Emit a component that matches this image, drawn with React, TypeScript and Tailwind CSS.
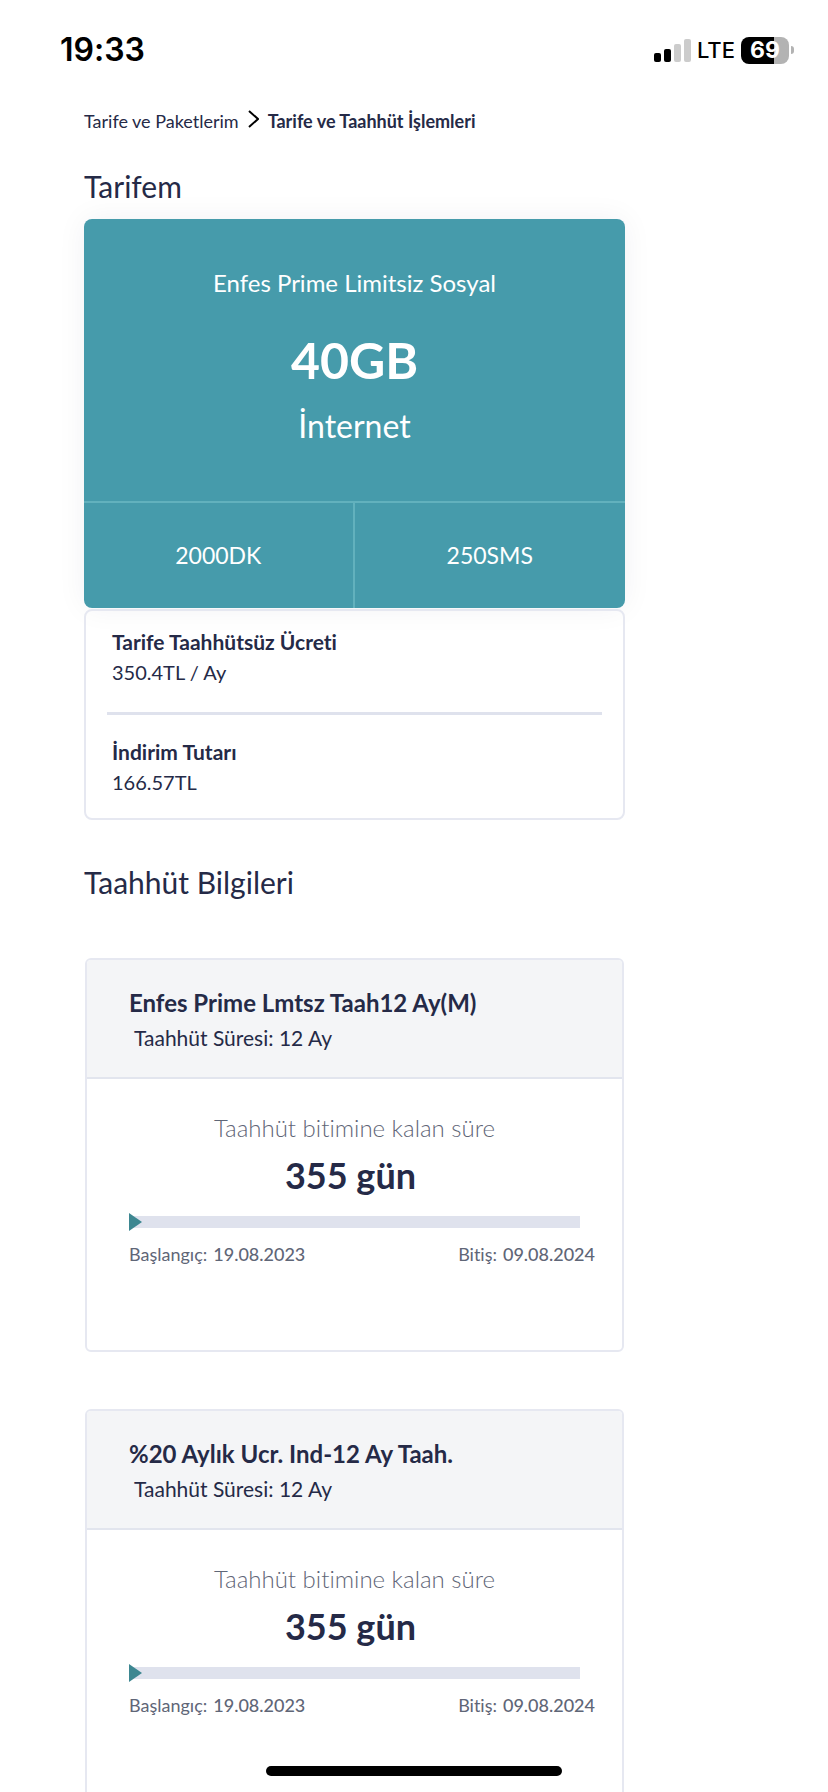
import React from "react";

const commitments = [
  {
    title: "Enfes Prime Lmtsz Taah12 Ay(M)",
    duration: "12 Ay",
    remaining: "355 gün",
    start: "19.08.2023",
    end: "09.08.2024",
  },
  {
    title: "%20 Aylık Ucr. Ind-12 Ay Taah.",
    duration: "12 Ay",
    remaining: "355 gün",
    start: "19.08.2023",
    end: "09.08.2024",
  },
];

const fees = [
  { label: "Tarife Taahhütsüz Ücreti", value: "350.4TL / Ay" },
  { label: "İndirim Tutarı", value: "166.57TL" },
];

function StatusBar() {
  return (
    <header className="flex h-[109px] items-start justify-between pl-[60px] pr-[34px] pt-[30px] font-['Inter',sans-serif] text-black">
      <span className="text-[32px] font-semibold leading-10">19:33</span>
      <div className="flex h-10 items-center gap-[6px]">
        <svg width="37" height="23" viewBox="0 0 37 23" aria-hidden="true">
          <rect x="0" y="14" width="7" height="9" rx="2" fill="#000" />
          <rect x="10" y="10" width="7" height="13" rx="2" fill="#000" />
          <rect x="20" y="5" width="7" height="18" rx="2" fill="#ccc" />
          <rect x="30" y="0" width="7" height="23" rx="2" fill="#ccc" />
        </svg>
        <span className="text-[22px] font-medium leading-10">LTE</span>
        <div className="flex items-center gap-[2px]">
          <div className="flex h-[27px] w-12 items-center justify-center rounded-lg bg-linear-to-r from-black from-[69%] to-[#b3b3b3] to-[69%] text-[23px] font-bold leading-none text-white">
            69
          </div>
          <div className="h-2 w-[3px] rounded-r-full bg-[#b3b3b3]" />
        </div>
      </div>
    </header>
  );
}

function Breadcrumb() {
  return (
    <nav aria-label="Breadcrumb" className="flex items-center text-lg leading-6">
      <a href="#paketler">Tarife ve Paketlerim</a>
      <svg
        className="mx-[9px] -mt-1"
        width="11"
        height="18"
        viewBox="0 0 11 18"
        fill="none"
        stroke="#000"
        strokeWidth="2"
        aria-hidden="true"
      >
        <path d="M1 1l9 8-9 8" />
      </svg>
      <span className="font-bold" aria-current="page">
        Tarife ve Taahhüt İşlemleri
      </span>
    </nav>
  );
}

function PlanCard() {
  return (
    <div className="mt-[13px] overflow-hidden rounded-lg bg-[#469bab] text-center text-white shadow-[0_0_30px_rgba(34,40,68,0.06)]">
      <div className="pb-[55px] pt-12">
        <p className="text-2xl leading-8">Enfes Prime Limitsiz Sosyal</p>
        <p className="mt-[31px] text-[50px] font-bold leading-[60px]">40GB</p>
        <p className="mt-4 text-[32px] leading-10">İnternet</p>
      </div>
      <div className="grid grid-cols-2 divide-x-2 divide-[#62b1bd] border-t-2 border-[#62b1bd] text-[23px] leading-[105px]">
        <p>2000DK</p>
        <p>250SMS</p>
      </div>
    </div>
  );
}

function FeeBox() {
  return (
    <dl className="mt-px rounded-lg border-2 border-[#e6e8f1] px-[21px] pb-5 pt-[15px] leading-[31px]">
      {fees.map((fee, i) => (
        <div
          key={fee.label}
          className={i > 0 ? "mt-6 border-t-3 border-[#dfe2ed] px-[5px] pt-[21px]" : "px-[5px]"}
        >
          <dt className="text-[21px] font-bold">{fee.label}</dt>
          <dd className="text-xl leading-[31px]">{fee.value}</dd>
        </div>
      ))}
    </dl>
  );
}

function CommitmentCard({ item }: { item: (typeof commitments)[number] }) {
  return (
    <article className="mx-px rounded-md border-2 border-[#e6e8f1]">
      <div className="rounded-t-sm border-b-2 border-[#e2e5ee] bg-[#f4f5f7] px-[42px] pb-[25px] pt-[27px]">
        <h3 className="text-2xl font-bold leading-8">{item.title}</h3>
        <p className="mt-[5px] pl-[5px] text-[21px] leading-7">Taahhüt Süresi: {item.duration}</p>
      </div>
      <div className="pb-[84px] pl-[42px] pr-[27px] pt-[33px]">
        <div className="pr-[15px] text-center">
          <p className="text-2xl font-light leading-8 text-[#5f6677]">
            Taahhüt bitimine kalan süre
          </p>
          <p className="mt-[9px] pr-2 text-4xl font-bold leading-[44px]">{item.remaining}</p>
          <div className="mt-4 flex items-center" role="progressbar" aria-label="Taahhüt" aria-valuenow={0}>
            <svg width="13" height="18" viewBox="0 0 13 18" aria-hidden="true">
              <path d="M0 3h13v12H0z" fill="#dfe2ed" />
              <path d="M0 0l13 9-13 9z" fill="#3d8791" />
            </svg>
            <div className="h-3 flex-1 bg-[#dfe2ed]" />
          </div>
        </div>
        <div className="mt-[11px] flex justify-between text-lg leading-6 text-[#5f6677]">
          <p className="flex gap-[6px]">
            Başlangıç: <span className="font-medium">{item.start}</span>
          </p>
          <p className="flex gap-[6px]">
            Bitiş: <span className="font-medium">{item.end}</span>
          </p>
        </div>
      </div>
    </article>
  );
}

function App() {
  return (
    <div className="relative h-screen overflow-hidden bg-white font-['Lato',sans-serif] text-[#252a47] [font-variant-ligatures:none]">
      <StatusBar />
      <main className="ml-[84px] mr-[203px]">
        <Breadcrumb />
        <h2 className="mt-[33px] text-3xl leading-10">Tarifem</h2>
        <PlanCard />
        <FeeBox />
        <h2 className="mt-[42px] text-3xl leading-10">Taahhüt Bilgileri</h2>
        <div className="mt-14 flex flex-col gap-[57px]">
          {commitments.map((item) => (
            <CommitmentCard key={item.title} item={item} />
          ))}
        </div>
      </main>
      {/* home indicator */}
      <div className="absolute bottom-4 left-1/2 h-[10px] w-[296px] -translate-x-1/2 rounded-full bg-black" />
    </div>
  );
}

export default App;
